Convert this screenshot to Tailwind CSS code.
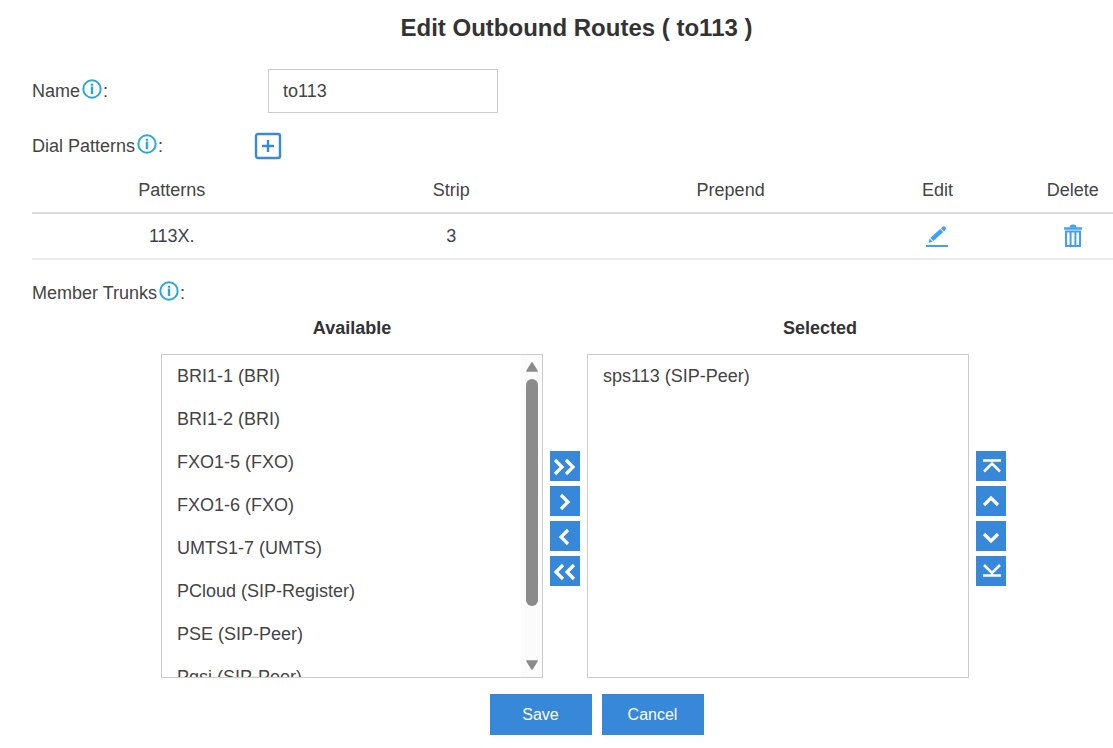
<!DOCTYPE html>
<html lang="en">
<head>
  <meta charset="UTF-8">
  <meta name="viewport" content="width=device-width, initial-scale=1.0">
  <title>Edit Outbound Routes</title>
  <script src="https://cdn.jsdelivr.net/npm/@tailwindcss/browser@4"></script>
</head>
<body class="bg-white font-['Liberation_Sans',Arial,sans-serif] text-[18px] leading-6 text-[#444] overflow-x-hidden">
  <!-- Shared info icon -->
  <svg class="hidden">
    <symbol id="info" viewBox="0 0 20 20">
      <circle cx="10" cy="10" r="8.7" fill="none" stroke="#27a9d8" stroke-width="2"/>
      <path d="M10 7.500v7.500M10 4.800v2" fill="none" stroke="#27a9d8" stroke-width="2.4"/>
    </symbol>
  </svg>

  <form class="pl-8 pt-3">
    <h1 class="ml-2 text-center text-2xl leading-8 font-bold text-[#333]">Edit Outbound Routes ( to113 )</h1>

    <!-- Name -->
    <div class="mt-[25px] flex items-center">
      <label for="name" class="w-[236px] flex items-center">Name<svg class="size-5 ml-0.5 mr-px mb-1"><use href="#info"/></svg>:</label>
      <input type="text" id="name" name="name" value="to113" class="w-[230px] h-[44px] px-[14px] border border-[#ccc]">
    </div>

    <!-- Dial patterns -->
    <div class="mt-[19px] flex items-center">
      <span class="w-[222px] flex items-center">Dial Patterns<svg class="size-5 ml-0.5 mr-px mb-1"><use href="#info"/></svg>:</span>
      <button type="button" aria-label="Add pattern">
        <svg class="size-7" viewBox="0 0 28 28" fill="none" stroke="#3a8adb">
          <rect x="2" y="2" width="24" height="24" rx="2" stroke-width="2.4"/>
          <path d="M8 14h12M14 8v12" stroke-width="2.4"/>
        </svg>
      </button>
    </div>

    <div class="-mr-7 mt-[7px]">
      <table class="w-full table-fixed text-center">
        <colgroup>
          <col class="w-[25.2%]">
          <col class="w-[25.2%]">
          <col class="w-[25.2%]">
          <col class="w-[12.1%]">
          <col class="w-[12.3%]">
        </colgroup>
        <thead>
          <tr class="h-[46px] border-b-2 border-[#dadada]">
            <th class="font-normal">Patterns</th>
            <th class="font-normal">Strip</th>
            <th class="font-normal">Prepend</th>
            <th class="font-normal">Edit</th>
            <th class="font-normal">Delete</th>
          </tr>
        </thead>
        <tbody>
          <tr class="h-[46px] border-b-2 border-[#ebebeb] text-[#3d4250]">
            <td>113X.</td>
            <td>3</td>
            <td></td>
            <td>
              <button type="button" aria-label="Edit" class="block mx-auto">
                <svg class="size-6" viewBox="0 0 24 24" fill="#409eff">
                  <path d="M1 21h22v2H1z"/>
                  <path d="M3.6 18.8l1-4.2 3.1 3.1zM5.4 13.8L15.2 5l3 3-9.8 9z"/>
                  <path d="M16 4.4l1.3-1.3a2.1 2.1 0 0 1 3 3L19 7.4z"/>
                </svg>
              </button>
            </td>
            <td>
              <button type="button" aria-label="Delete" class="block mx-auto">
                <svg class="size-6" viewBox="0 0 24 24" fill="none" stroke="#409eff" stroke-width="2">
                  <path d="M3 4.500h18" stroke-width="2.4"/>
                  <path d="M9.500 3.500a2.500 2 0 0 1 5 0" fill="#409eff"/>
                  <path d="M5 7.500h14v14.500H5z"/>
                  <path d="M9.600 8v14M14.400 8v14"/>
                </svg>
              </button>
            </td>
          </tr>
        </tbody>
      </table>
    </div>

    <!-- Member trunks -->
    <div class="mt-[21px] flex items-center">Member Trunks<svg class="size-5 ml-0.5 mr-px mb-1"><use href="#info"/></svg>:</div>

    <div class="mt-[11px] ml-[129px] mr-[107px] grid grid-cols-[1fr_30px_1fr_30px] gap-x-[7px] items-center">
      <label for="available" class="text-center font-bold text-[#333]">Available</label>
      <label for="selected" class="col-start-3 pl-[84px] text-center font-bold text-[#333]">Selected</label>

      <div class="col-start-1 mt-[14px] h-[324px] flex border border-[#ccc]">
        <select id="available" name="available" multiple class="flex-1 min-w-0 h-full pt-0.5 overflow-hidden">
          <option class="h-[43px] py-[9px] px-[15px]">BRI1-1 (BRI)</option>
          <option class="h-[43px] py-[9px] px-[15px]">BRI1-2 (BRI)</option>
          <option class="h-[43px] py-[9px] px-[15px]">FXO1-5 (FXO)</option>
          <option class="h-[43px] py-[9px] px-[15px]">FXO1-6 (FXO)</option>
          <option class="h-[43px] py-[9px] px-[15px]">UMTS1-7 (UMTS)</option>
          <option class="h-[43px] py-[9px] px-[15px]">PCloud (SIP-Register)</option>
          <option class="h-[43px] py-[9px] px-[15px]">PSE (SIP-Peer)</option>
          <option class="h-[43px] py-[9px] px-[15px]">Pgsi (SIP-Peer)</option>
        </select>
        <div class="w-[21px] py-1.5 flex flex-col items-center bg-[#fbfbfb]">
          <svg class="w-3 h-3" viewBox="0 0 12 12" fill="#8b8b8b" stroke="#8b8b8b" stroke-width="1.5" stroke-linejoin="round"><path d="M6 2l5 8H1z"/></svg>
          <div class="mt-1.5 w-3 h-[227px] rounded-full bg-[#8b8b8b]"></div>
          <svg class="mt-auto w-3 h-3" viewBox="0 0 12 12" fill="#8b8b8b" stroke="#8b8b8b" stroke-width="1.5" stroke-linejoin="round"><path d="M6 10l5-8H1z"/></svg>
        </div>
      </div>

      <div class="mt-[18px] flex flex-col gap-[5px]">
        <button type="button" aria-label="Add all" class="size-[30px] bg-[#3788d8]"><svg viewBox="0 0 30 30" fill="none" stroke="#fff" stroke-width="3.2"><path d="M5 9l7 7-7 7M16 9l7 7-7 7"/></svg></button>
        <button type="button" aria-label="Add" class="size-[30px] bg-[#3788d8]"><svg viewBox="0 0 30 30" fill="none" stroke="#fff" stroke-width="3.2"><path d="M11 9l7 7-7 7"/></svg></button>
        <button type="button" aria-label="Remove" class="size-[30px] bg-[#3788d8]"><svg viewBox="0 0 30 30" fill="none" stroke="#fff" stroke-width="3.2"><path d="M18 9l-7 7 7 7"/></svg></button>
        <button type="button" aria-label="Remove all" class="size-[30px] bg-[#3788d8]"><svg viewBox="0 0 30 30" fill="none" stroke="#fff" stroke-width="3.2"><path d="M13 9l-7 7 7 7M24 9l-7 7 7 7"/></svg></button>
      </div>

      <select id="selected" name="selected" multiple class="mt-[14px] w-full h-[324px] pt-0.5 border border-[#ccc]">
        <option class="h-[43px] py-[9px] px-[15px]">sps113 (SIP-Peer)</option>
      </select>

      <div class="mt-[18px] flex flex-col gap-[5px]">
        <button type="button" aria-label="Move to top" class="size-[30px] bg-[#3788d8]"><svg viewBox="0 0 30 30" fill="none" stroke="#fff" stroke-width="2.5"><path d="M7 9.500h18M8 20.500l8-8 8 8"/></svg></button>
        <button type="button" aria-label="Move up" class="size-[30px] bg-[#3788d8]"><svg viewBox="0 0 30 30" fill="none" stroke="#fff" stroke-width="3.2"><path d="M8 19l7-7 7 7"/></svg></button>
        <button type="button" aria-label="Move down" class="size-[30px] bg-[#3788d8]"><svg viewBox="0 0 30 30" fill="none" stroke="#fff" stroke-width="3.2"><path d="M8 13l7 7 7-7"/></svg></button>
        <button type="button" aria-label="Move to bottom" class="size-[30px] bg-[#3788d8]"><svg viewBox="0 0 30 30" fill="none" stroke="#fff" stroke-width="2.5"><path d="M7 19.500h18M8 9l8 8 8-8"/></svg></button>
      </div>
    </div>

    <div class="mt-4 ml-12 flex justify-center gap-[10px] text-base text-white">
      <button type="submit" class="w-[102px] h-[41px] bg-[#3788d8]">Save</button>
      <button type="button" class="w-[102px] h-[41px] bg-[#3788d8]">Cancel</button>
    </div>
  </form>
</body>
</html>
